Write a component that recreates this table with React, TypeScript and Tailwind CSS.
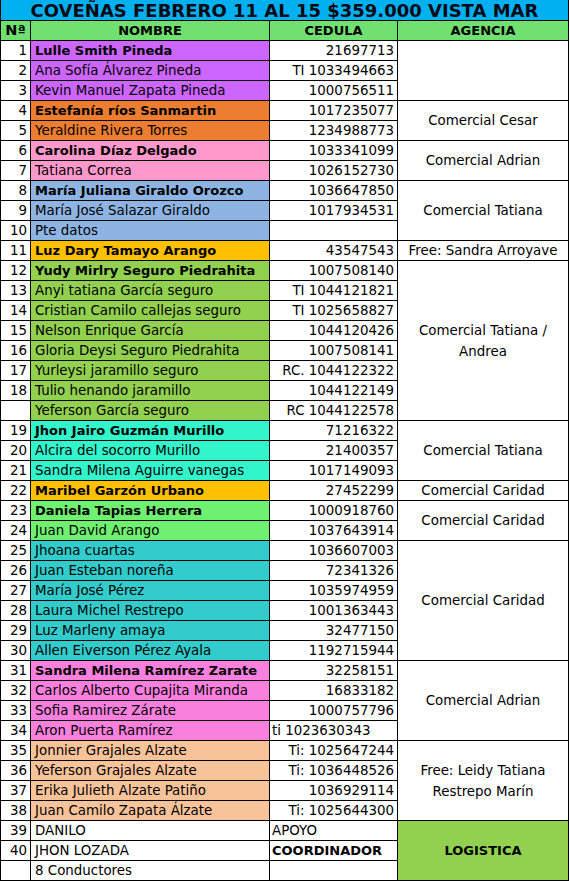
import React from "react";

type Row = {
  n: string;
  name: string;
  bold?: boolean;
  bg: string;
  ced: string;
  cedLeft?: boolean;
  cedBold?: boolean;
};

const PURPLE = "bg-[#cc66ff]";
const ORANGE = "bg-[#ed7d31]";
const PINK = "bg-[#ff99cc]";
const BLUE = "bg-[#8db4e2]";
const GOLD = "bg-[#ffc000]";
const GREEN = "bg-[#92d050]";
const CYAN = "bg-[#33f5cc]";
const LGREEN = "bg-[#70f070]";
const TEAL = "bg-[#33cccc]";
const PINK2 = "bg-[#fa80de]";
const PEACH = "bg-[#f9c39a]";
const WHITE = "bg-white";

const rows: Row[] = [
  { n: "1", name: "Lulle Smith Pineda", bold: true, bg: PURPLE, ced: "21697713" },
  { n: "2", name: "Ana Sofía Álvarez Pineda", bg: PURPLE, ced: "TI 1033494663" },
  { n: "3", name: "Kevin Manuel Zapata Pineda", bg: PURPLE, ced: "1000756511" },
  { n: "4", name: "Estefanía ríos Sanmartin", bold: true, bg: ORANGE, ced: "1017235077" },
  { n: "5", name: "Yeraldine Rivera Torres", bg: ORANGE, ced: "1234988773" },
  { n: "6", name: "Carolina Díaz Delgado", bold: true, bg: PINK, ced: "1033341099" },
  { n: "7", name: "Tatiana Correa", bg: PINK, ced: "1026152730" },
  { n: "8", name: "María Juliana Giraldo Orozco", bold: true, bg: BLUE, ced: "1036647850" },
  { n: "9", name: "María José Salazar Giraldo", bg: BLUE, ced: "1017934531" },
  { n: "10", name: "Pte datos", bg: BLUE, ced: "" },
  { n: "11", name: "Luz Dary Tamayo Arango", bold: true, bg: GOLD, ced: "43547543" },
  { n: "12", name: "Yudy Mirlry Seguro Piedrahita", bold: true, bg: GREEN, ced: "1007508140" },
  { n: "13", name: "Anyi tatiana García seguro", bg: GREEN, ced: "TI 1044121821" },
  { n: "14", name: "Cristian Camilo callejas seguro", bg: GREEN, ced: "TI 1025658827" },
  { n: "15", name: "Nelson Enrique García", bg: GREEN, ced: "1044120426" },
  { n: "16", name: "Gloria Deysi Seguro Piedrahita", bg: GREEN, ced: "1007508141" },
  { n: "17", name: "Yurleysi jaramillo seguro", bg: GREEN, ced: "RC. 1044122322" },
  { n: "18", name: "Tulio henando jaramillo", bg: GREEN, ced: "1044122149" },
  { n: "", name: "Yeferson García seguro", bg: GREEN, ced: "RC 1044122578" },
  { n: "19", name: "Jhon Jairo Guzmán Murillo", bold: true, bg: CYAN, ced: "71216322" },
  { n: "20", name: "Alcira del socorro Murillo", bg: CYAN, ced: "21400357" },
  { n: "21", name: "Sandra Milena Aguirre vanegas", bg: CYAN, ced: "1017149093" },
  { n: "22", name: "Maribel Garzón Urbano", bold: true, bg: GOLD, ced: "27452299" },
  { n: "23", name: "Daniela Tapias Herrera", bold: true, bg: LGREEN, ced: "1000918760" },
  { n: "24", name: "Juan David Arango", bg: LGREEN, ced: "1037643914" },
  { n: "25", name: "Jhoana cuartas", bg: TEAL, ced: "1036607003" },
  { n: "26", name: "Juan Esteban noreña", bg: TEAL, ced: "72341326" },
  { n: "27", name: "María José Pérez", bg: TEAL, ced: "1035974959" },
  { n: "28", name: "Laura Michel Restrepo", bg: TEAL, ced: "1001363443" },
  { n: "29", name: "Luz Marleny amaya", bg: TEAL, ced: "32477150" },
  { n: "30", name: "Allen Eiverson Pérez Ayala", bg: TEAL, ced: "1192715944" },
  { n: "31", name: "Sandra Milena Ramírez Zarate", bold: true, bg: PINK2, ced: "32258151" },
  { n: "32", name: "Carlos Alberto Cupajita Miranda", bg: PINK2, ced: "16833182" },
  { n: "33", name: "Sofia Ramirez Zárate", bg: PINK2, ced: "1000757796" },
  { n: "34", name: "Aron Puerta Ramírez", bg: PINK2, ced: "ti 1023630343", cedLeft: true },
  { n: "35", name: "Jonnier Grajales Alzate", bg: PEACH, ced: "Ti: 1025647244" },
  { n: "36", name: "Yeferson Grajales Alzate", bg: PEACH, ced: "Ti: 1036448526" },
  { n: "37", name: "Erika Julieth Alzate Patiño", bg: PEACH, ced: "1036929114" },
  { n: "38", name: "Juan Camilo Zapata Álzate", bg: PEACH, ced: "Ti: 1025644300" },
  { n: "39", name: "DANILO", bg: WHITE, ced: "APOYO", cedLeft: true },
  { n: "40", name: "JHON LOZADA", bg: WHITE, ced: "COORDINADOR", cedLeft: true, cedBold: true },
  { n: "", name: "8 Conductores", bg: WHITE, ced: "" },
];

type Agency = { lines: string[]; span: string; bg: string; bold?: boolean };

// keyed by starting row index
const agencies: Record<number, Agency> = {
  0: { lines: [], span: "row-span-3", bg: "bg-white" },
  3: { lines: ["Comercial Cesar"], span: "row-span-2", bg: "bg-white" },
  5: { lines: ["Comercial Adrian"], span: "row-span-2", bg: "bg-white" },
  7: { lines: ["Comercial Tatiana"], span: "row-span-3", bg: "bg-white" },
  10: { lines: ["Free: Sandra Arroyave"], span: "row-span-1", bg: "bg-white" },
  11: { lines: ["Comercial Tatiana /", "Andrea"], span: "row-span-8", bg: "bg-white" },
  19: { lines: ["Comercial Tatiana"], span: "row-span-3", bg: "bg-white" },
  22: { lines: ["Comercial Caridad"], span: "row-span-1", bg: "bg-white" },
  23: { lines: ["Comercial Caridad"], span: "row-span-2", bg: "bg-white" },
  25: { lines: ["Comercial Caridad"], span: "row-span-6", bg: "bg-white" },
  31: { lines: ["Comercial Adrian"], span: "row-span-4", bg: "bg-white" },
  35: { lines: ["Free: Leidy Tatiana", "Restrepo Marín"], span: "row-span-4", bg: "bg-white" },
  39: { lines: ["LOGISTICA"], span: "row-span-3", bg: "bg-[#92d050]", bold: true },
};

const cell = "border-r border-b border-black flex items-center overflow-hidden whitespace-nowrap";

export default function App() {
  return (
    <div className="w-[570px] h-[881px] bg-white text-black font-['DejaVu_Sans',sans-serif] text-[13.4px] leading-none">
      <div className="grid grid-cols-[30px_239px_128px_171px] grid-rows-[21px_repeat(43,20px)] border-l border-black w-[569px]">
        <div className={`${cell} col-span-4 justify-center bg-[#00b0f0] font-bold text-[18px] text-[#0a0a14] pt-[1px]`}>
          COVEÑAS FEBRERO 11 AL 15 $359.000 VISTA MAR
        </div>
        <div className={`${cell} justify-center bg-[#70e070] font-bold text-[14.5px]`}>Nª</div>
        <div className={`${cell} justify-center bg-[#70e070] font-bold text-[13px]`}>NOMBRE</div>
        <div className={`${cell} justify-center bg-[#70e070] font-bold text-[13px]`}>CEDULA</div>
        <div className={`${cell} justify-center bg-[#70e070] font-bold text-[13px]`}>AGENCIA</div>
        {rows.map((r, i) => {
          const ag = agencies[i];
          return (
            <React.Fragment key={i}>
              <div className={`${cell} justify-end pr-[3px] bg-white`}>{r.n}</div>
              <div className={`${cell} ${r.bg} pl-[4px] ${r.bold ? "font-bold text-[13px]" : ""}`}>{r.name}</div>
              <div
                className={`${cell} bg-white ${r.cedLeft ? "justify-start pl-[2px]" : "justify-end pr-[3px]"} ${r.cedBold ? "font-bold text-[13px]" : ""}`}
              >
                {r.ced}
              </div>
              {ag && (
                <div
                  className={`border-r border-b border-black ${ag.span} ${ag.bg} flex flex-col items-center justify-center text-center whitespace-nowrap leading-[21px] ${ag.bold ? "font-bold text-[13px]" : ""}`}
                >
                  {ag.lines.map((l, k) => (
                    <span key={k}>{l}</span>
                  ))}
                </div>
              )}
            </React.Fragment>
          );
        })}
      </div>
    </div>
  );
}
